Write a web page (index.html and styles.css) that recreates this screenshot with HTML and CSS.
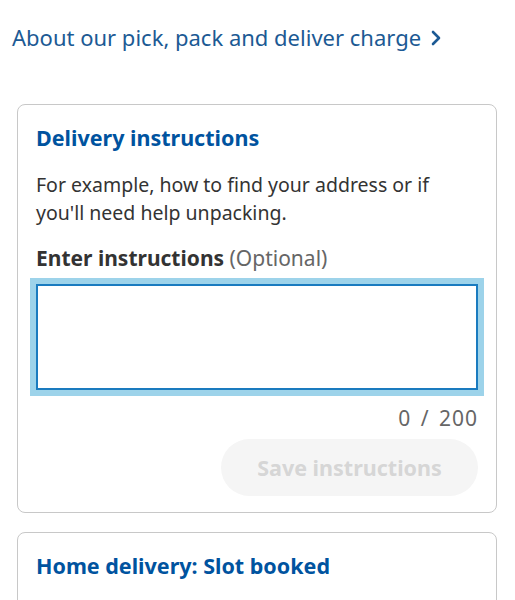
FILE: index.html
```html
<!DOCTYPE html>
<html>
  <head>
    <link rel="stylesheet" href="styles.css">
  </head>
  <body>
    <a class="info-link" href="#">
      About our pick, pack and deliver charge
      <svg class="chevron" width="12" height="16" viewBox="0 0 12 16">
        <path d="M3 2l6 6-6 6" fill="none" stroke="currentColor" stroke-width="2.6" stroke-linecap="round" stroke-linejoin="round" />
      </svg>
    </a>

    <section class="card">
      <h2 class="card-title">Delivery instructions</h2>
      <p class="card-text">
        For example, how to find your address or if you'll need help unpacking.
      </p>
      <label class="field-label" for="instructions">
        <strong>Enter instructions</strong> <span class="optional">(Optional)</span>
      </label>
      <textarea id="instructions" class="instructions" maxlength="200"></textarea>
      <div class="counter">0 / 200</div>
      <div class="actions">
        <button class="save-btn" disabled>Save instructions</button>
      </div>
    </section>

    <section class="card card-slot">
      <h2 class="card-title">Home delivery: Slot booked</h2>
    </section>
  </body>
</html>
```

FILE: styles.css
```css
body {
  margin: 0;
  background: #ffffff;
  font-family: "Noto Sans", "Open Sans", sans-serif;
  color: #333333;
}

.info-link {
  display: flex;
  align-items: center;
  gap: 9px;
  margin: 22px 12px 0;
  font-size: 22px;
  line-height: 30px;
  color: #1c5a94;
  text-decoration: none;
}

.chevron {
  margin-top: 2px;
}

.card {
  margin: 52px 18px 19px 17px;
  padding: 19px 18px 16px;
  border: 1px solid #c8c8c8;
  border-radius: 8px;
}

.card + .card {
  margin-top: 0;
}

.card-slot {
  min-height: 80px;
}

.card-title {
  margin: 0;
  font-size: 21.5px;
  line-height: 28px;
  font-weight: 700;
  color: #00539f;
}

.card-text {
  max-width: 420px;
  margin: 19px 0 0;
  font-size: 19.5px;
  line-height: 28px;
  color: #333333;
}

.field-label {
  display: block;
  margin-top: 17px;
  font-size: 21px;
  line-height: 28px;
  color: #333333;
}

.optional {
  color: #666666;
}

.instructions {
  display: block;
  box-sizing: border-box;
  width: 100%;
  height: 106px;
  margin-top: 12px;
  border: 2px solid #1a7bbf;
  box-shadow: 0 0 0 6px #9dd3ea;
  border-radius: 0;
  outline: none;
  resize: none;
  font-family: inherit;
}

.counter {
  margin-top: 14px;
  text-align: right;
  font-size: 21px;
  line-height: 28px;
  word-spacing: 3px;
  letter-spacing: 1px;
  color: #666666;
}

.actions {
  display: flex;
  justify-content: flex-end;
  margin-top: 7px;
}

.save-btn {
  width: 257px;
  height: 57px;
  border: none;
  border-radius: 29px;
  background: #f5f5f5;
  color: #d6d6d6;
  font-family: inherit;
  font-size: 21.5px;
  font-weight: 700;
}
```
